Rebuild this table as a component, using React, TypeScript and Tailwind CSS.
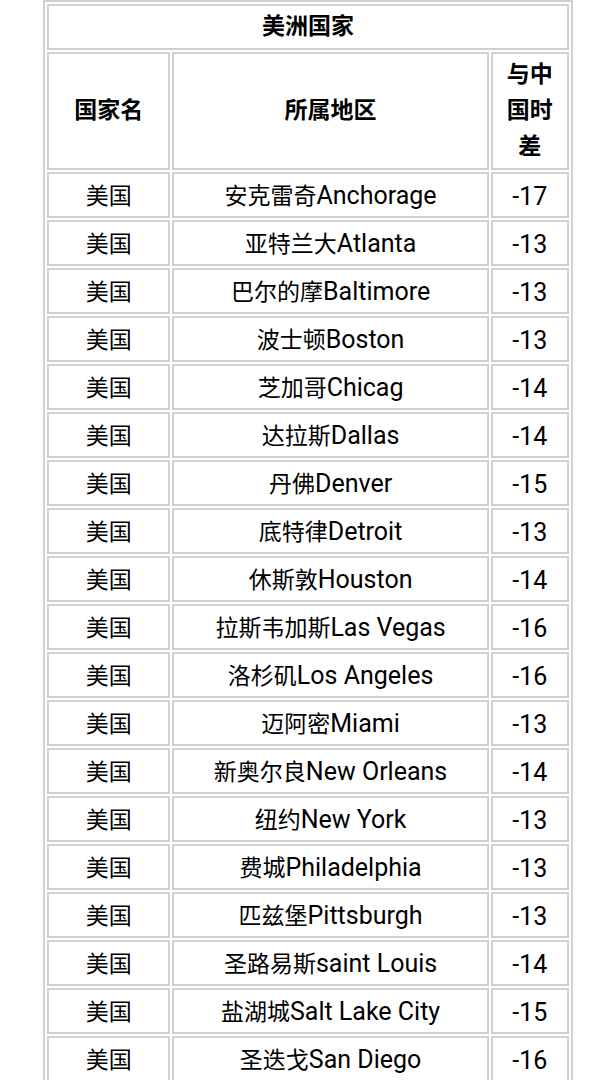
const rows: [string, string, string, string][] = [
  ['美国', '安克雷奇', 'Anchorage', '-17'],
  ['美国', '亚特兰大', 'Atlanta', '-13'],
  ['美国', '巴尔的摩', 'Baltimore', '-13'],
  ['美国', '波士顿', 'Boston', '-13'],
  ['美国', '芝加哥', 'Chicag', '-14'],
  ['美国', '达拉斯', 'Dallas', '-14'],
  ['美国', '丹佛', 'Denver', '-15'],
  ['美国', '底特律', 'Detroit', '-13'],
  ['美国', '休斯敦', 'Houston', '-14'],
  ['美国', '拉斯韦加斯', 'Las Vegas', '-16'],
  ['美国', '洛杉矶', 'Los Angeles', '-16'],
  ['美国', '迈阿密', 'Miami', '-13'],
  ['美国', '新奥尔良', 'New Orleans', '-14'],
  ['美国', '纽约', 'New York', '-13'],
  ['美国', '费城', 'Philadelphia', '-13'],
  ['美国', '匹兹堡', 'Pittsburgh', '-13'],
  ['美国', '圣路易斯', 'saint Louis', '-14'],
  ['美国', '盐湖城', 'Salt Lake City', '-15'],
  ['美国', '圣迭戈', 'San Diego', '-16'],
  ['美国', '旧金山', 'San Francisco', '-16'],
  ['美国', '西雅图', 'Seattle', '-16'],
];

const cell = 'border-2 border-[#d0d0d0] px-[6px] py-[3px] text-center align-middle';
const dataCell = 'border-2 border-[#d0d0d0] px-[6px] pt-[5px] pb-[1px] text-center align-middle';

function App() {
  return (
    <div className="bg-white min-h-screen font-['Roboto','Noto_Sans_CJK_SC',sans-serif] text-[23px] leading-[36px] text-black">
      <table className="mx-auto w-[530px] table-fixed border-separate border-spacing-[2px] border-2 border-[#d0d0d0]">
        <colgroup>
          <col className="w-[123px]" />
          <col className="w-[315px]" />
          <col className="w-[78px]" />
        </colgroup>
        <tbody>
          <tr>
            <th colSpan={3} className={cell + ' font-bold'}>
              美洲国家
            </th>
          </tr>
          <tr>
            <th className={cell + ' font-bold'}>国家名</th>
            <th className={cell + ' font-bold'}>所属地区</th>
            <th className={cell + ' font-bold'}>与中国时差</th>
          </tr>
          {rows.map(([country, cn, en, diff]) => (
            <tr key={en}>
              <td className={dataCell}>{country}</td>
              <td className={dataCell + ' whitespace-nowrap'}>
                {cn}
                <span className="text-[25px] leading-[28px]">{en}</span>
              </td>
              <td className={dataCell + ' text-[25px]'}>{diff}</td>
            </tr>
          ))}
        </tbody>
      </table>
    </div>
  );
}

export default App;
